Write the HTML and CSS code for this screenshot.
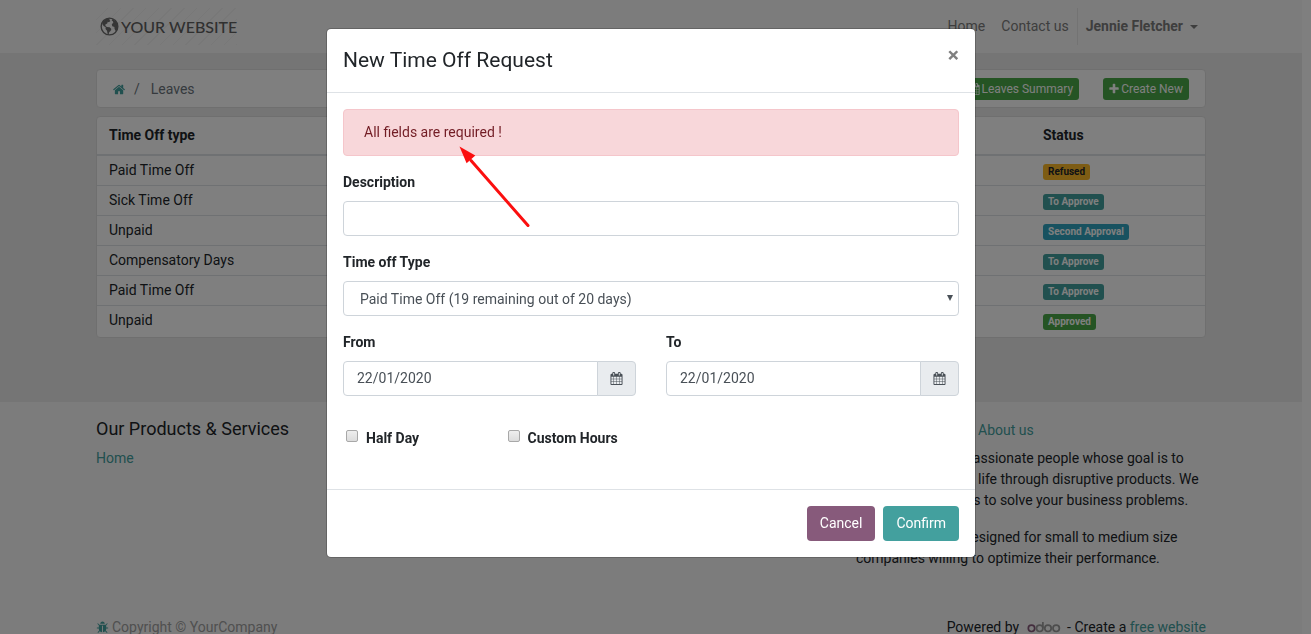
FILE: index.html
```html
<!DOCTYPE html>
<html lang="en">
<head>
<meta charset="utf-8">
<title>Leaves</title>
<link rel="stylesheet" href="styles.css">
</head>
<body>
<svg class="sprite" aria-hidden="true">
  <symbol id="i-home" viewBox="0 0 1792 1792"><path d="M1408 992v480q0 26-19 45t-45 19h-384v-384h-256v384h-384q-26 0-45-19t-19-45v-480q0-1 .5-3t.5-3l575-474 575 474q1 2 1 6zm223-69l-62 74q-8 9-21 11h-3q-13 0-21-7l-692-577-692 577q-12 8-24 7-13-2-21-11l-62-74q-8-10-7-23.5t11-21.5l719-599q32-26 76-26t76 26l244 204v-195q0-14 9-23t23-9h192q14 0 23 9t9 23v408l219 182q10 8 11 21.5t-7 23.5z"/></symbol>
  <symbol id="i-bug" viewBox="0 0 1792 1792"><path d="M1696 960q0 26-19 45t-45 19h-224q0 171-67 290l208 209q19 19 19 45t-19 45q-18 19-45 19t-45-19l-198-197q-5 5-15 13t-42 28.5-65 36.5-82 29-97 13v-896h-128v896q-51 0-101.5-13.5t-87-33-66-39-43.5-32.5l-15-14-183 207q-20 21-48 21-24 0-43-16-19-18-20.5-44.5t15.5-46.5l202-227q-58-114-58-274h-224q-26 0-45-19t-19-45 19-45 45-19h224v-294l-173-173q-19-19-19-45t19-45 45-19 45 19l173 173h844l173-173q19-19 45-19t45 19 19 45-19 45l-173 173v294h224q26 0 45 19t19 45zm-480-576h-640q0-133 93.5-226.5t226.5-93.5 226.5 93.5 93.5 226.5z"/></symbol>
  <symbol id="i-calendar" viewBox="0 0 1792 1792"><path d="M192 1664h288v-288h-288v288zm352 0h320v-288h-320v288zm-352-352h288v-320h-288v320zm352 0h320v-320h-320v320zm-352-384h288v-288h-288v288zm736 736h320v-288h-320v288zm-384-736h320v-288h-320v288zm768 736h288v-288h-288v288zm-384-352h320v-320h-320v320zm-352-864v-288q0-13-9.5-22.5t-22.5-9.5h-64q-13 0-22.5 9.5t-9.5 22.5v288q0 13 9.5 22.5t22.5 9.5h64q13 0 22.5-9.5t9.5-22.5zm736 864h288v-320h-288v320zm-384-384h320v-288h-320v288zm384 0h288v-288h-288v288zm32-480v-288q0-13-9.5-22.5t-22.5-9.5h-64q-13 0-22.5 9.5t-9.5 22.5v288q0 13 9.5 22.5t22.5 9.5h64q13 0 22.5-9.5t9.5-22.5zm384-64v1280q0 52-38 90t-90 38h-1408q-52 0-90-38t-38-90v-1280q0-52 38-90t90-38h128v-96q0-66 47-113t113-47h64q66 0 113 47t47 113v96h384v-96q0-66 47-113t113-47h64q66 0 113 47t47 113v96h128q52 0 90 38t38 90z"/></symbol>
  <symbol id="i-plus" viewBox="0 0 1792 1792"><path d="M1600 736v192q0 40-28 68t-68 28h-416v416q0 40-28 68t-68 28h-192q-40 0-68-28t-28-68v-416h-416q-40 0-68-28t-28-68v-192q0-40 28-68t68-28h416v-416q0-40 28-68t68-28h192q40 0 68 28t28 68v416h416q40 0 68 28t28 68z"/></symbol>
  <symbol id="i-globe" viewBox="0 0 20 20"><path fill-rule="evenodd" d="M10 .5a9.5 9.5 0 1 0 0 19a9.5 9.5 0 0 0 0-19zM10 1.9a8.1 8.1 0 1 1 0 16.2a8.1 8.1 0 0 1 0-16.2z"/><path d="M3.200 4.500L6.800 1.800L10.500 1.500L9.800 3L11 4.200L9.300 5.600L8.200 5L7.600 6.800L5.600 8L5.800 9.600L7.300 10.400L10.200 10.800L12 12.500L11.200 14.600L9.600 16L9.300 18L8 17.600L7.400 14.500L5.800 12.600L6 10.900L3.800 9.500L2.400 7zM13 2L16.800 4.500L18.700 8.500L18.600 12.500L16.500 14.800L15.300 12.600L15.200 10.600L12.900 9.800L12.400 7.600L14 6L13.500 4.500L12.300 3.800z"/></symbol>
</svg>

<div class="page">
  <header class="site-header">
    <div class="container header-row">
      <a class="logo" href="#"><svg class="logo-icon"><use href="#i-globe"/></svg>YOUR WEBSITE</a>
      <nav class="nav">
        <a href="#">Home</a>
        <a href="#">Contact us</a>
        <a class="nav-user" href="#">Jennie Fletcher<span class="caret"></span></a>
      </nav>
    </div>
  </header>

  <main class="main">
    <div class="container">
      <div class="card crumb-bar">
        <a class="crumb-home" href="#" aria-label="Home"><svg class="icon"><use href="#i-home"/></svg></a>
        <span class="crumb-sep">/</span>
        <span class="crumb">Leaves</span>
        <div class="crumb-actions">
          <button class="btn-sm" type="button"><svg class="icon-sm"><use href="#i-calendar"/></svg>Leaves Summary</button>
          <button class="btn-sm" type="button"><svg class="icon-sm"><use href="#i-plus"/></svg>Create New</button>
        </div>
      </div>

      <div class="card table-card">
        <table class="leaves">
          <thead><tr><th>Time Off type</th><th class="col-status">Status</th></tr></thead>
          <tbody>
            <tr><td>Paid Time Off</td><td><span class="badge warning">Refused</span></td></tr>
            <tr><td>Sick Time Off</td><td><span class="badge primary">To Approve</span></td></tr>
            <tr><td>Unpaid</td><td><span class="badge info">Second Approval</span></td></tr>
            <tr><td>Compensatory Days</td><td><span class="badge primary">To Approve</span></td></tr>
            <tr><td>Paid Time Off</td><td><span class="badge primary">To Approve</span></td></tr>
            <tr><td>Unpaid</td><td><span class="badge success">Approved</span></td></tr>
          </tbody>
        </table>
      </div>
    </div>
  </main>

  <footer class="footer">
    <div class="container">
      <div class="footer-cols">
        <section>
          <h5>Our Products &amp; Services</h5>
          <a href="#">Home</a>
        </section>
        <section class="about">
          <h5>YourCompany<small>- <a href="#">About us</a></small></h5>
          <p>We are a team of passionate people whose goal is to improve everyone's life through disruptive products. We build great products to solve your business problems.</p>
          <p>Our products are designed for small to medium size companies willing to optimize their performance.</p>
        </section>
      </div>
      <div class="footer-bottom">
        <div class="copyright"><a href="#" aria-label="Debug"><svg class="icon"><use href="#i-bug"/></svg></a>Copyright © YourCompany</div>
        <div class="powered">Powered by
          <svg class="odoo" viewBox="0 0 34 12" role="img" aria-label="odoo"><g fill="none" stroke-width="1.700"><circle cx="4.500" cy="7.300" r="3.200" stroke="#875a7b"/><g stroke="#9a9a9a"><circle cx="12.700" cy="7.300" r="3.200"/><path d="M15.900 1v6.300"/><circle cx="21" cy="7.300" r="3.200"/><circle cx="29.200" cy="7.300" r="3.200"/></g></g></svg>
          - Create a <a href="#">free website</a></div>
      </div>
    </div>
  </footer>
</div>

<div class="backdrop">
  <form class="modal" role="dialog" aria-labelledby="modal-title">
    <div class="modal-header">
      <h4 id="modal-title">New Time Off Request</h4>
      <button class="close" type="button" aria-label="Close">×</button>
    </div>
    <div class="modal-body">
      <div class="alert" role="alert">All fields are required !</div>
      <svg class="arrow" viewBox="0 0 72 84" aria-hidden="true"><path d="M12 14.500L69 79.500" stroke="#fb0f0f" stroke-width="3" stroke-linecap="round"/><path d="M.500 .500L16.300 9.500L7.600 17.300z" fill="#fb0f0f"/></svg>
      <div class="field">
        <label for="desc">Description</label>
        <input class="control" id="desc" type="text">
      </div>
      <div class="field">
        <label for="type">Time off Type</label>
        <div class="select-wrap">
          <select class="control" id="type"><option>Paid Time Off (19 remaining out of 20 days)</option></select>
        </div>
      </div>
      <div class="dates">
        <div class="field">
          <label for="from">From</label>
          <div class="group"><input class="control" id="from" type="text" value="22/01/2020"><button class="addon" type="button" aria-label="Pick start date"><svg class="icon"><use href="#i-calendar"/></svg></button></div>
        </div>
        <div class="field">
          <label for="to">To</label>
          <div class="group"><input class="control" id="to" type="text" value="22/01/2020"><button class="addon" type="button" aria-label="Pick end date"><svg class="icon"><use href="#i-calendar"/></svg></button></div>
        </div>
      </div>
      <div class="checks">
        <div class="check"><input type="checkbox" id="half"><label for="half">Half Day</label></div>
        <div class="check"><input type="checkbox" id="custom"><label for="custom">Custom Hours</label></div>
      </div>
    </div>
    <div class="modal-footer">
      <button class="btn secondary" type="button">Cancel</button>
      <button class="btn primary" type="submit">Confirm</button>
    </div>
  </form>
</div>
</body>
</html>
```
FILE: styles.css
```css
*, *::before, *::after { box-sizing: border-box; }

body {
  margin: 0;
  height: 100vh;
  overflow: hidden;
  background: #fff;
  color: #212529;
  font: 14px/21px Roboto, "Liberation Sans", sans-serif;
}

a { color: #43a09e; text-decoration: none; }
button, input, select { font: inherit; }
.sprite { display: none; }
.icon { width: 13px; height: 13px; fill: currentColor; flex: none; }
.icon-sm { width: 12px; height: 12px; fill: currentColor; flex: none; }

.page { margin-right: 9px; }
.container { max-width: 1110px; margin: 0 auto; }

.site-header { background: #f9f9f9; padding: 8px 0; }
.header-row { display: flex; justify-content: space-between; align-items: center; }
.logo {
  display: flex;
  align-items: center;
  gap: 2px;
  height: 37px;
  padding: 0 0 0 4px;
  color: #606060;
  font: 500 16px/20px Lato, sans-serif;
  background: repeating-linear-gradient(135deg, transparent 0 8px, #f0f0f0 8px 9px);
}
.logo-icon { width: 19px; height: 19px; fill: #6c6c6c; }
.nav { display: flex; align-items: center; }
.nav a { padding: 8px; color: #7c7c7c; }
.nav .nav-user { display: flex; align-items: center; border-left: 1px solid #e6e6e6; font-weight: 700; }
.caret { margin-left: 7px; border: 4px solid transparent; border-top-color: currentColor; border-bottom: 0; }

.main { background: #ebebeb; padding: 16px 0 64px; }
.card { background: #fff; border: 1px solid #dfdfdf; border-radius: 4px; }
.table-card { padding-bottom: 2px; }
.crumb-bar {
  display: flex;
  align-items: center;
  gap: 8px;
  margin-bottom: 8px;
  padding: 8px 16px 7px;
  color: #6c757d;
}
.crumb-home { display: flex; }
.crumb { margin-left: 3px; }
.crumb-actions { display: flex; gap: 24px; margin-left: auto; }
.btn-sm {
  display: flex;
  align-items: center;
  gap: 1px;
  padding: 1px 6px 1px 5px;
  border: 0;
  border-radius: 3px;
  background: #4aa948;
  color: #fff;
  font-size: 12px;
  line-height: 20px;
}

.leaves { width: 100%; border-collapse: collapse; }
.leaves th, .leaves td { padding: 4px 12px; border-top: 1px solid #dee2e6; text-align: left; }
.leaves th { padding: 8px 12px; border-top: 0; border-bottom: 2px solid #dee2e6; }
.leaves .col-status { width: 174px; }
.badge {
  display: inline-block;
  padding: 2px 5px;
  border-radius: 3px;
  color: #fff;
  font-size: 10px;
  line-height: 12px;
  font-weight: 700;
}
.badge.warning { background: #fbb829; color: #212529; }
.badge.primary { background: #43a09e; }
.badge.info { background: #31a5c0; }
.badge.success { background: #4aa948; }

.footer { background: #f9f9f9; padding: 16px 0; }
.footer-cols { display: flex; justify-content: space-between; }
.footer h5 { margin: 0 0 8px; font-size: 18px; line-height: 22px; font-weight: 400; }
.footer small { margin-left: 2px; font-size: 14px; line-height: 1; }
.footer p { margin: 0 0 16px; }
.about { width: 350px; }
.footer-bottom { display: flex; justify-content: space-between; margin-top: 32px; }
.copyright { display: flex; align-items: center; gap: 3px; color: #a0a0a0; }
.copyright a { display: flex; }
.odoo { width: 34px; height: 12px; margin: 0 3px 0 4px; vertical-align: -1px; }

.backdrop {
  position: fixed;
  inset: 0;
  padding: 28px 9px 28px 0;
  background: rgba(0, 0, 0, .5);
}
.modal {
  position: relative;
  max-width: 650px;
  margin: 0 auto;
  background: #fff;
  background-clip: padding-box;
  border: 1px solid rgba(0, 0, 0, .2);
  border-radius: 5px;
}
.modal-header { display: flex; justify-content: space-between; align-items: flex-start; padding: 16px; border-bottom: 1px solid #dee2e6; }
.modal-header h4 { margin: 0; font-size: 21px; line-height: 31px; font-weight: 400; }
.close { padding: 0; border: 0; background: none; color: #808080; font-size: 21px; line-height: 21px; font-weight: 700; }

.modal-body { position: relative; padding: 16px; }
.alert { margin-bottom: 16px; padding: 12px 20px; border: 1px solid #f5c6cb; border-radius: 4px; background: #f8d7da; color: #721c24; }
.arrow { position: absolute; left: 132px; top: 53px; width: 72px; height: 84px; }
.field { margin-bottom: 16px; }
.field label { display: block; margin-bottom: 8px; font-weight: 700; }
.control {
  display: block;
  width: 100%;
  height: 35px;
  padding: 5px 13px 7px;
  border: 1px solid #ced4da;
  border-radius: 4px;
  background: #fff;
  color: #495057;
}
.select-wrap { position: relative; }
.select-wrap::after {
  content: "";
  position: absolute;
  right: 6px;
  top: 14px;
  border: 3px solid transparent;
  border-top: 6px solid #495057;
  border-bottom: 0;
}
select.control { appearance: none; padding: 2px 16px 0; }
.dates { display: grid; grid-template-columns: 1fr 1fr; gap: 30px; }
.group { display: flex; }
.group .control { flex: 1; min-width: 0; border-radius: 4px 0 0 4px; }
.addon {
  display: flex;
  align-items: center;
  justify-content: center;
  width: 39px;
  margin-left: -1px;
  padding: 0;
  border: 1px solid #ced4da;
  border-radius: 0 4px 4px 0;
  background: #e9ecef;
  color: #495057;
}
.checks { display: grid; grid-template-columns: repeat(4, 1fr); margin-right: -30px; padding: 16px 0 24px; }
.check { display: flex; gap: 8px; padding-left: 3px; white-space: nowrap; }
.check input {
  appearance: none;
  width: 12px;
  height: 12px;
  margin: 2px 0 0;
  border: 1px solid #a8a8a8;
  border-radius: 2px;
  background: linear-gradient(#eee, #dcdcdc);
}
.check label { font-weight: 700; }

.modal-footer { display: flex; justify-content: flex-end; gap: 8px; padding: 16px; border-top: 1px solid #dee2e6; }
.btn { padding: 7px 13px; border: 0; border-radius: 4px; color: #fff; }
.btn.secondary { background: #875a7b; }
.btn.primary { background: #43a09e; }
```
